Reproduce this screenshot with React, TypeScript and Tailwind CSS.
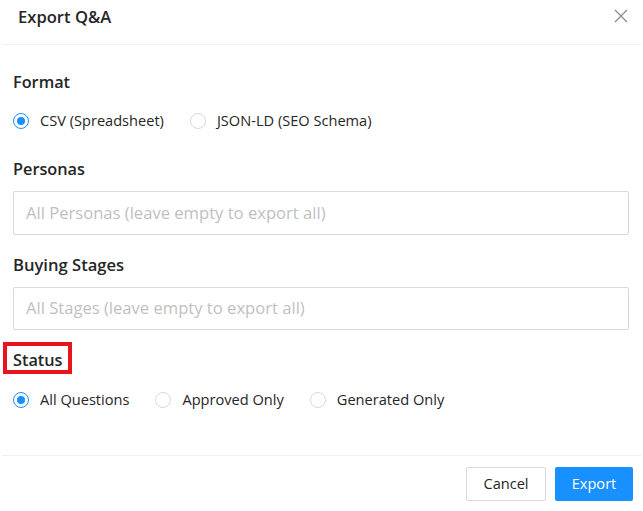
import React from "react";

function Radio({ checked, label }: { checked?: boolean; label: string }) {
  return (
    <label className="flex items-center gap-[11px] h-[22px]">
      <span
        className={
          "relative w-[16px] h-[16px] rounded-full border box-border " +
          (checked ? "border-[#1890ff]" : "border-[#d9d9d9]")
        }
      >
        {checked && (
          <span className="absolute left-[3px] top-[3px] w-[8px] h-[8px] rounded-full bg-[#1890ff]" />
        )}
      </span>
      <span className="text-[14.6px] text-[#262626]">{label}</span>
    </label>
  );
}

export default function App() {
  return (
    <div
      className="w-[643px] h-[511px] bg-white relative overflow-hidden"
      style={{ fontFamily: '"Open Sans", "Noto Sans", sans-serif' }}
    >
      <div className="h-[45px] mx-[2px] border-b border-[#f0f0f0] flex items-start justify-between">
        <div className="pl-[16px] pt-[5px] text-[16.6px] font-semibold leading-[24px] text-[#262626]">
          Export Q&amp;A
        </div>
        <svg className="mr-[12px] mt-[8px]" width="16" height="16" viewBox="0 0 16 16">
          <path d="M2 2 L14 14 M14 2 L2 14" stroke="#8c8c8c" strokeWidth="1.3" fill="none" />
        </svg>
      </div>

      <div className="pl-[13px] pr-[14px]">
        <div className="mt-[25px] text-[16.3px] font-semibold leading-[24px] text-[#262626]">Format</div>
        <div className="mt-[16px] flex items-center gap-[26px]">
          <Radio checked label="CSV (Spreadsheet)" />
          <Radio label="JSON-LD (SEO Schema)" />
        </div>

        <div className="mt-[25px] text-[16.3px] font-semibold leading-[24px] text-[#262626]">Personas</div>
        <div className="mt-[10px] h-[44px] border border-[#d9d9d9] rounded-[2px] flex items-center px-[12px] text-[16.6px] text-[#bfbfbf]">
          All Personas (leave empty to export all)
        </div>

        <div className="mt-[18px] text-[16.6px] font-semibold leading-[24px] text-[#262626]">Buying Stages</div>
        <div className="mt-[10px] h-[43px] border border-[#d9d9d9] rounded-[2px] flex items-center px-[12px] text-[16.6px] text-[#bfbfbf]">
          All Stages (leave empty to export all)
        </div>

        <div className="mt-[18px] relative text-[16.3px] font-semibold leading-[24px] text-[#262626]">
          Status
          <span className="absolute left-[-10px] top-[-6px] w-[69px] h-[32px] border-[4px] border-[#e8141e]" />
        </div>
        <div className="mt-[17px] flex items-center gap-[26px]">
          <Radio checked label="All Questions" />
          <Radio label="Approved Only" />
          <Radio label="Generated Only" />
        </div>
      </div>

      <div className="absolute left-[2px] right-[2px] top-[455px] border-t border-[#f0f0f0]" />
      <div className="absolute right-[10px] top-[467px] flex gap-[9px]">
        <button className="h-[34px] w-[80px] border border-[#d9d9d9] rounded-[2px] bg-white text-[14.6px] text-[#262626]">
          Cancel
        </button>
        <button className="h-[34px] w-[78px] rounded-[2px] bg-[#1890ff] text-[14.6px] text-white">
          Export
        </button>
      </div>
    </div>
  );
}
